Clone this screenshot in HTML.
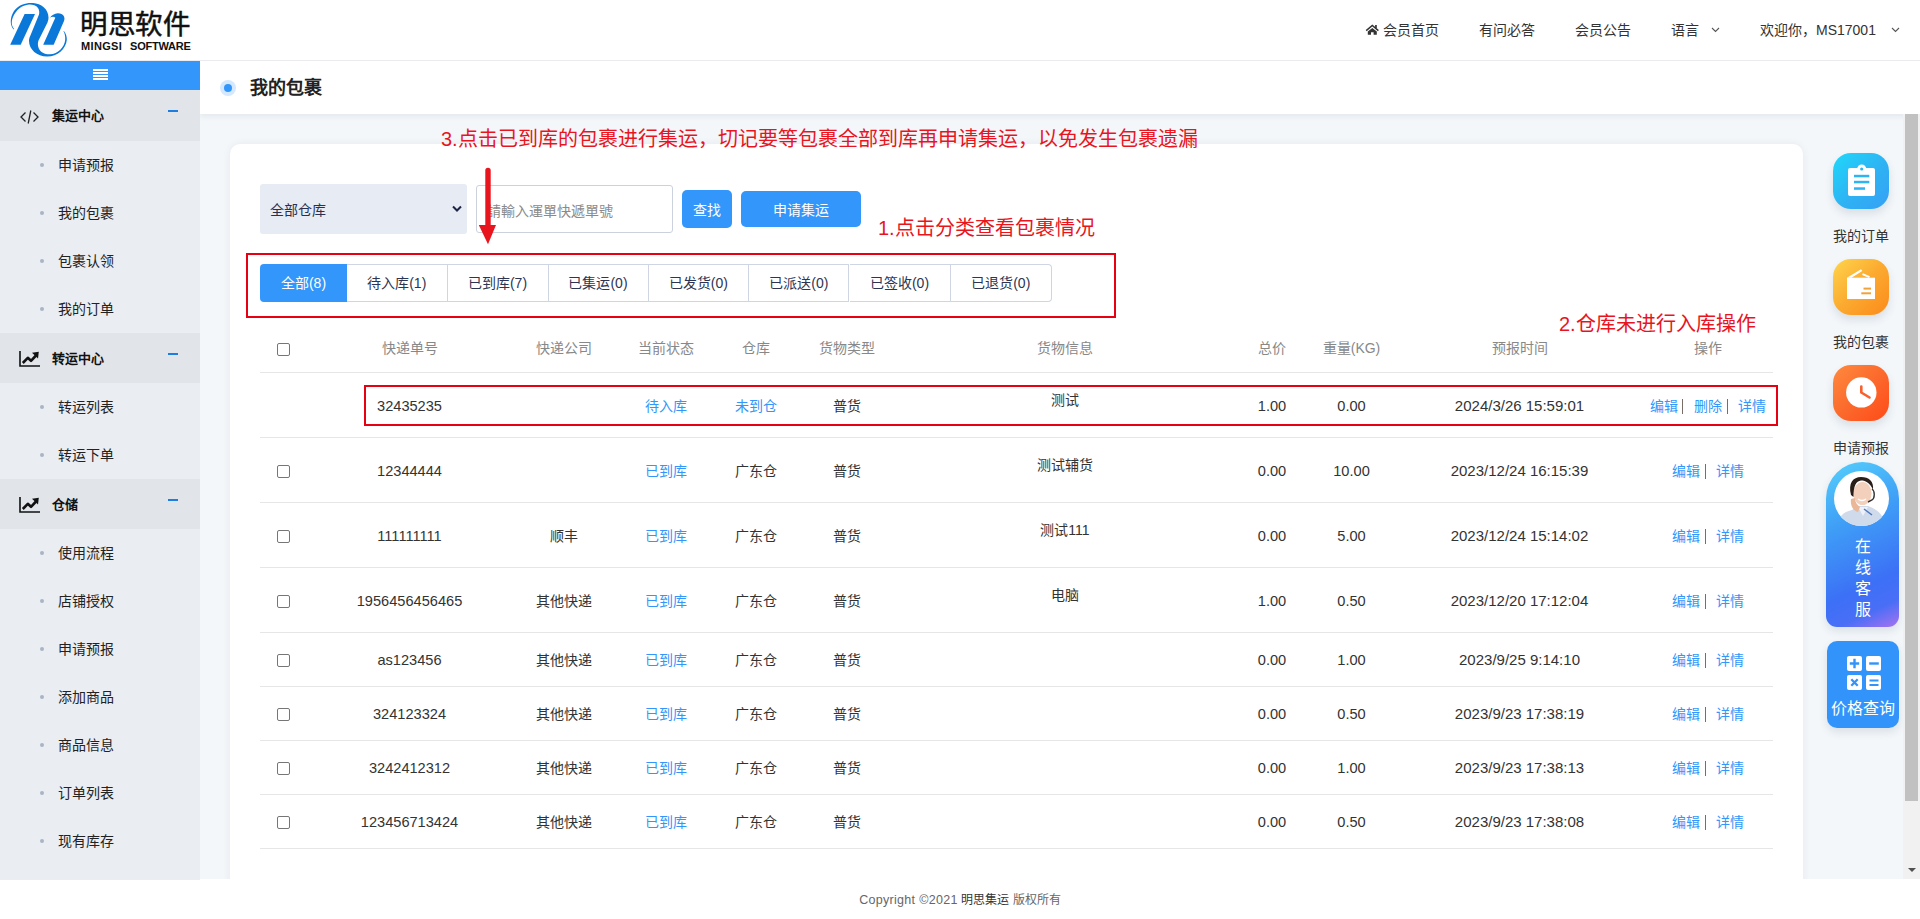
<!DOCTYPE html>
<html lang="zh-CN"><head><meta charset="utf-8">
<style>
*{box-sizing:border-box;margin:0;padding:0}
html,body{width:1920px;height:919px;overflow:hidden;background:#fff}
body{position:relative;font-family:"Liberation Sans",sans-serif;color:#333;font-size:14px}
.abs{position:absolute;white-space:nowrap}
#hdr{position:absolute;left:0;top:0;width:1920px;height:61px;background:#fff;border-bottom:1px solid #e9ebee}
.nav{position:absolute;top:20px;height:20px;line-height:20px;font-size:14px;color:#333}
#side{position:absolute;left:0;top:61px;width:200px;height:820px;background:#eaedf1}
#sidebar-top{position:absolute;left:0;top:0;width:200px;height:29px;background:#3296fa}
.grp{position:absolute;left:0;width:200px;height:50px;background:#e1e4e9}
.grp .t{position:absolute;left:52px;top:16px;line-height:20px;font-size:13px;font-weight:bold;color:#111}
.grp .m{position:absolute;left:168px;top:20px;width:10px;height:2px;background:#1e7de0}
.it{position:absolute;left:0;width:200px;height:48px}
.it .d{position:absolute;left:40px;top:22px;width:4px;height:4px;border-radius:50%;background:#aab4c4}
.it .t{position:absolute;left:58px;top:14px;line-height:20px;font-size:14px;color:#222}
#main{position:absolute;left:200px;top:61px;width:1720px;height:818px;background:#f3f7fa;overflow:hidden}
#mhdr{position:absolute;left:0;top:0;width:1720px;height:53px;background:#fff;box-shadow:0 2px 6px rgba(30,40,70,.08);z-index:3}
#card{position:absolute;left:30px;top:83px;width:1573px;height:800px;background:#fff;border-radius:10px;box-shadow:0 0 8px rgba(30,40,70,.06)}
#sb{position:absolute;left:1703px;top:53px;width:17px;height:765px;background:#f1f1f1;z-index:4}
#sbthumb{position:absolute;left:2px;top:0;width:13px;height:687px;background:#c1c1c1}
.red{color:#e8141e}
.tab{position:absolute;top:264px;height:38px;line-height:36px;border:1px solid #cfd5e2;border-left:none;background:#fff;color:#2e3552;font-size:14px;text-align:center}
.th{position:absolute;top:338px;line-height:20px;font-size:14px;color:#888;transform:translateX(-50%)}
.c{position:absolute;line-height:20px;font-size:14px;color:#333;transform:translateX(-50%)}
.n{font-size:14.6px}
.dt{font-size:15px}
.bl{color:#3296fa}
.line{position:absolute;left:260px;width:1513px;height:1px;background:#e6e6e6}
.cb{position:absolute;left:277px;width:13px;height:13px;border:1px solid #767676;border-radius:2px;background:#fff}
.fw{position:absolute;width:56px;height:56px;border-radius:18px}
.pipe{width:1.4px;height:15px;margin-top:3px;background:#7a6d65}
.fwt{position:absolute;left:1833px;line-height:20px;font-size:14px;color:#333}
</style></head>
<body>
<!-- HEADER -->
<div id="hdr">
  <svg class="abs" style="left:5px;top:0" width="70" height="60" viewBox="0 0 70 60">
    <g fill="#0a78d8">
      <path d="M19.6,14 L30,14 L15.7,44.7 L5.2,44.7 Z"/>
      <path d="M8.8,29.4 C5,26 4.5,18 9,11 C14,4 22,2.5 28,3 C36,3.5 43.5,9 43.5,17.5 C43.5,19.5 43,21 42.5,22.5 L33.5,40.5 C32.5,43 32.8,46 33.8,48.5 C35.5,52.5 40,54.5 45,54.3 C53,54 59.5,47 60.2,40 C60.5,36.5 59.8,33.5 58.5,31.2 L58.9,31 C61,33.5 62,37 61.8,40 C61,49 52,56.8 42,56.6 C32,56.4 24,49.5 24,41 C24,39 24.5,37.5 25,36.5 L34,14.5 C34.5,12.5 34.3,10 33,8 C31,5 27,4.3 24,4.5 C17,5 11,10 8,17 C6,22 6.5,26 9.2,29 Z"/>
      <path d="M38.2,44.7 L48.7,44.7 L59,21 C60.5,17.5 58.5,13.5 53,13.3 C49.5,13.2 46.5,15.5 45,17.8 C46.5,16.8 49,16.3 50.3,17.8 Z"/>
    </g>
  </svg>
  <div class="abs" style="left:80px;top:8px;font-size:27.5px;line-height:34px;letter-spacing:0.6px;color:#111;-webkit-text-stroke:0.5px #111">明思软件</div>
  <div class="abs" style="left:81px;top:39px;font-size:11px;line-height:14px;font-weight:bold;color:#111;letter-spacing:0.35px">MINGSI</div>
  <div class="abs" style="left:130px;top:39px;font-size:11px;line-height:14px;font-weight:bold;color:#111;letter-spacing:-0.2px">SOFTWARE</div>

  <svg class="abs" style="left:1365px;top:24px" width="15" height="12" viewBox="0 0 15 12"><path d="M1.2,6.6 L7.3,1.5 L13.4,6.6" stroke="#333" stroke-width="1.5" fill="none"/><rect x="10.1" y="1" width="1.7" height="3" fill="#333"/><path fill="#333" d="M7.3,3.9 L11.8,7.4 L11.8,10.8 L8.6,10.8 L8.6,8.3 L6,8.3 L6,10.8 L2.8,10.8 L2.8,7.4 Z"/></svg>
  <div class="nav" style="left:1383px">会员首页</div>
  <div class="nav" style="left:1479px">有问必答</div>
  <div class="nav" style="left:1575px">会员公告</div>
  <div class="nav" style="left:1671px">语言</div>
  <svg class="abs" style="left:1711px;top:27px" width="9" height="6" viewBox="0 0 9 6"><path d="M1,1 L4.5,4.5 L8,1" stroke="#555" stroke-width="1.1" fill="none"/></svg>
  <div class="nav" style="left:1760px">欢迎你，MS17001</div>
  <svg class="abs" style="left:1891px;top:27px" width="9" height="6" viewBox="0 0 9 6"><path d="M1,1 L4.5,4.5 L8,1" stroke="#555" stroke-width="1.1" fill="none"/></svg>
</div>

<!-- SIDEBAR -->
<div id="side">
  <div id="sidebar-top">
    <div class="abs" style="left:93px;top:8px;width:15px;height:11px;background:repeating-linear-gradient(#fff 0 2px,transparent 2px 3px)"></div>
  </div>
  <div class="grp" style="top:29px;height:51px">
    <svg class="abs" style="left:20px;top:20px" width="19" height="14" viewBox="0 0 19 14"><path d="M5.5,2.5 L1,7 L5.5,11.5 M13.5,2.5 L18,7 L13.5,11.5 M10.8,0.5 L8.2,13.5" stroke="#222" stroke-width="1.3" fill="none"/></svg>
    <div class="t">集运中心</div><div class="m"></div>
  </div>
  <div class="it" style="top:80px"><div class="d"></div><div class="t">申请预报</div></div>
  <div class="it" style="top:128px"><div class="d"></div><div class="t">我的包裹</div></div>
  <div class="it" style="top:176px"><div class="d"></div><div class="t">包裹认领</div></div>
  <div class="it" style="top:224px"><div class="d"></div><div class="t">我的订单</div></div>
  <div class="grp" style="top:272px">
    <svg class="abs" style="left:19px;top:18px" width="22" height="16" viewBox="0 0 22 16"><path d="M1,0 L1,15 L21,15" stroke="#111" stroke-width="1.6" fill="none"/><path d="M3.8,12 L8.8,6.8 L12,9.8 L17,4.5" stroke="#111" stroke-width="2.6" fill="none" stroke-linejoin="round"/><path d="M13,1.8 L19.8,0.8 L19,7.5 Z" fill="#111"/></svg>
    <div class="t">转运中心</div><div class="m"></div>
  </div>
  <div class="it" style="top:322px"><div class="d"></div><div class="t">转运列表</div></div>
  <div class="it" style="top:370px"><div class="d"></div><div class="t">转运下单</div></div>
  <div class="grp" style="top:418px">
    <svg class="abs" style="left:19px;top:18px" width="22" height="16" viewBox="0 0 22 16"><path d="M1,0 L1,15 L21,15" stroke="#111" stroke-width="1.6" fill="none"/><path d="M3.8,12 L8.8,6.8 L12,9.8 L17,4.5" stroke="#111" stroke-width="2.6" fill="none" stroke-linejoin="round"/><path d="M13,1.8 L19.8,0.8 L19,7.5 Z" fill="#111"/></svg>
    <div class="t">仓储</div><div class="m"></div>
  </div>
  <div class="it" style="top:468px"><div class="d"></div><div class="t">使用流程</div></div>
  <div class="it" style="top:516px"><div class="d"></div><div class="t">店铺授权</div></div>
  <div class="it" style="top:564px"><div class="d"></div><div class="t">申请预报</div></div>
  <div class="it" style="top:612px"><div class="d"></div><div class="t">添加商品</div></div>
  <div class="it" style="top:660px"><div class="d"></div><div class="t">商品信息</div></div>
  <div class="it" style="top:708px"><div class="d"></div><div class="t">订单列表</div></div>
  <div class="it" style="top:756px"><div class="d"></div><div class="t">现有库存</div></div>
</div>

<!-- MAIN -->
<div id="main">
  <div id="mhdr">
    <div class="abs" style="left:20px;top:19px;width:16px;height:16px;border-radius:50%;background:#d5e8fd"></div>
    <div class="abs" style="left:24px;top:23px;width:8px;height:8px;border-radius:50%;background:#3296fa"></div>
    <div class="abs" style="left:50px;top:15px;font-size:18px;line-height:24px;font-weight:bold;color:#222">我的包裹</div>
  </div>
  <div id="card"></div>
  <div id="sb"><div id="sbthumb"></div>
    <div class="abs" style="left:5px;top:754px;width:0;height:0;border-left:4px solid transparent;border-right:4px solid transparent;border-top:4px solid #505050"></div>
  </div>
</div>

<!-- CONTENT (page coords) -->
<div id="content" style="position:absolute;left:0;top:0;width:1920px;height:879px;overflow:hidden;pointer-events:none">
<div class="abs red" style="left:441px;top:125px;font-size:20px;line-height:28px">3.点击已到库的包裹进行集运，切记要等包裹全部到库再申请集运，以免发生包裹遗漏</div>
<div class="abs" style="left:260px;top:184px;width:207px;height:50px;background:#e6ebf4;border-radius:3px"></div>
<div class="abs" style="left:270px;top:200px;line-height:20px;color:#2a3150">全部仓库</div>
<svg class="abs" style="left:452px;top:205px" width="10" height="8" viewBox="0 0 10 8"><path d="M1,1.5 L5,5.5 L9,1.5" stroke="#1e2645" stroke-width="2" fill="none"/></svg>
<div class="abs" style="left:476px;top:185px;width:197px;height:48px;border:1px solid #cbd2de;border-radius:3px;background:#fff"></div>
<div class="abs" style="left:487px;top:201px;line-height:20px;color:#8a8a8a">請輸入運單快遞單號</div>
<div class="abs" style="left:682px;top:190px;width:50px;height:38px;border-radius:5px;background:#3296fa;color:#fff;text-align:center;line-height:38px;padding-top:1px">查找</div>
<div class="abs" style="left:741px;top:191px;width:120px;height:36px;border-radius:5px;background:#3296fa;color:#fff;text-align:center;line-height:36px;padding-top:1px">申请集运</div>
<svg class="abs" style="left:476px;top:166px" width="24" height="80" viewBox="0 0 24 80"><path d="M12,4.5 L12,62" stroke="#e8141e" stroke-width="5.4" stroke-linecap="round"/><path d="M2.8,59 L20,59 L12,78.3 Z" fill="#e8141e"/></svg>
<div class="abs red" style="left:878px;top:214px;font-size:20px;line-height:28px">1.点击分类查看包裹情况</div>
<div class="abs" style="left:246px;top:253px;width:870px;height:65px;border:2.6px solid #e60012"></div>
<div class="abs" style="left:260px;top:264px;width:87px;height:38px;line-height:38px;background:#3296fa;color:#fff;text-align:center;border-radius:4px 0 0 4px">全部(8)</div>
<div class="tab" style="left:347px;width:100.5px;">待入库(1)</div>
<div class="tab" style="left:447.5px;width:101.0px;">已到库(7)</div>
<div class="tab" style="left:548.5px;width:100.0px;">已集运(0)</div>
<div class="tab" style="left:648.5px;width:100.79999999999995px;">已发货(0)</div>
<div class="tab" style="left:749.3px;width:100.20000000000005px;">已派送(0)</div>
<div class="tab" style="left:849.5px;width:101.0px;">已签收(0)</div>
<div class="tab" style="left:950.5px;width:101.5px;border-radius:0 4px 4px 0;">已退货(0)</div>
<div class="cb" style="top:343px"></div>
<div class="th" style="left:409.5px">快递单号</div>
<div class="th" style="left:564px">快递公司</div>
<div class="th" style="left:666px">当前状态</div>
<div class="th" style="left:756px">仓库</div>
<div class="th" style="left:847px">货物类型</div>
<div class="th" style="left:1065px">货物信息</div>
<div class="th" style="left:1272px">总价</div>
<div class="th" style="left:1351.5px">重量(KG)</div>
<div class="th" style="left:1519.5px">预报时间</div>
<div class="th" style="left:1707.5px">操作</div>
<div class="line" style="top:372px"></div>
<div class="c n" style="left:409.5px;top:396px">32435235</div>
<div class="c bl" style="left:666px;top:396px">待入库</div>
<div class="c bl" style="left:756px;top:396px">未到仓</div>
<div class="c" style="left:847px;top:396px">普货</div>
<div class="c" style="left:1065px;top:390px">测试</div>
<div class="c n" style="left:1272px;top:396px">1.00</div>
<div class="c n" style="left:1351.5px;top:396px">0.00</div>
<div class="c dt" style="left:1519.5px;top:396px">2024/3/26 15:59:01</div>
<div class="abs bl" style="left:1650px;top:396px;line-height:20px">编辑</div>
<div class="abs pipe" style="left:1682px;top:396px"></div>
<div class="abs bl" style="left:1694px;top:396px;line-height:20px">删除</div>
<div class="abs pipe" style="left:1727px;top:396px"></div>
<div class="abs bl" style="left:1738px;top:396px;line-height:20px">详情</div>
<div class="line" style="top:437px"></div>
<div class="cb" style="top:465px"></div>
<div class="c n" style="left:409.5px;top:461px">12344444</div>
<div class="c bl" style="left:666px;top:461px">已到库</div>
<div class="c" style="left:756px;top:461px">广东仓</div>
<div class="c" style="left:847px;top:461px">普货</div>
<div class="c" style="left:1065px;top:455px">测试辅货</div>
<div class="c n" style="left:1272px;top:461px">0.00</div>
<div class="c n" style="left:1351.5px;top:461px">10.00</div>
<div class="c dt" style="left:1519.5px;top:461px">2023/12/24 16:15:39</div>
<div class="abs bl" style="left:1672px;top:461px;line-height:20px">编辑</div>
<div class="abs pipe" style="left:1705px;top:461px"></div>
<div class="abs bl" style="left:1716px;top:461px;line-height:20px">详情</div>
<div class="line" style="top:502px"></div>
<div class="cb" style="top:530px"></div>
<div class="c n" style="left:409.5px;top:526px">111111111</div>
<div class="c" style="left:564px;top:526px">顺丰</div>
<div class="c bl" style="left:666px;top:526px">已到库</div>
<div class="c" style="left:756px;top:526px">广东仓</div>
<div class="c" style="left:847px;top:526px">普货</div>
<div class="c" style="left:1065px;top:520px">测试111</div>
<div class="c n" style="left:1272px;top:526px">0.00</div>
<div class="c n" style="left:1351.5px;top:526px">5.00</div>
<div class="c dt" style="left:1519.5px;top:526px">2023/12/24 15:14:02</div>
<div class="abs bl" style="left:1672px;top:526px;line-height:20px">编辑</div>
<div class="abs pipe" style="left:1705px;top:526px"></div>
<div class="abs bl" style="left:1716px;top:526px;line-height:20px">详情</div>
<div class="line" style="top:567px"></div>
<div class="cb" style="top:595px"></div>
<div class="c n" style="left:409.5px;top:591px">1956456456465</div>
<div class="c" style="left:564px;top:591px">其他快递</div>
<div class="c bl" style="left:666px;top:591px">已到库</div>
<div class="c" style="left:756px;top:591px">广东仓</div>
<div class="c" style="left:847px;top:591px">普货</div>
<div class="c" style="left:1065px;top:585px">电脑</div>
<div class="c n" style="left:1272px;top:591px">1.00</div>
<div class="c n" style="left:1351.5px;top:591px">0.50</div>
<div class="c dt" style="left:1519.5px;top:591px">2023/12/20 17:12:04</div>
<div class="abs bl" style="left:1672px;top:591px;line-height:20px">编辑</div>
<div class="abs pipe" style="left:1705px;top:591px"></div>
<div class="abs bl" style="left:1716px;top:591px;line-height:20px">详情</div>
<div class="line" style="top:632px"></div>
<div class="cb" style="top:654px"></div>
<div class="c n" style="left:409.5px;top:650px">as123456</div>
<div class="c" style="left:564px;top:650px">其他快递</div>
<div class="c bl" style="left:666px;top:650px">已到库</div>
<div class="c" style="left:756px;top:650px">广东仓</div>
<div class="c" style="left:847px;top:650px">普货</div>
<div class="c n" style="left:1272px;top:650px">0.00</div>
<div class="c n" style="left:1351.5px;top:650px">1.00</div>
<div class="c dt" style="left:1519.5px;top:650px">2023/9/25 9:14:10</div>
<div class="abs bl" style="left:1672px;top:650px;line-height:20px">编辑</div>
<div class="abs pipe" style="left:1705px;top:650px"></div>
<div class="abs bl" style="left:1716px;top:650px;line-height:20px">详情</div>
<div class="line" style="top:686px"></div>
<div class="cb" style="top:708px"></div>
<div class="c n" style="left:409.5px;top:704px">324123324</div>
<div class="c" style="left:564px;top:704px">其他快递</div>
<div class="c bl" style="left:666px;top:704px">已到库</div>
<div class="c" style="left:756px;top:704px">广东仓</div>
<div class="c" style="left:847px;top:704px">普货</div>
<div class="c n" style="left:1272px;top:704px">0.00</div>
<div class="c n" style="left:1351.5px;top:704px">0.50</div>
<div class="c dt" style="left:1519.5px;top:704px">2023/9/23 17:38:19</div>
<div class="abs bl" style="left:1672px;top:704px;line-height:20px">编辑</div>
<div class="abs pipe" style="left:1705px;top:704px"></div>
<div class="abs bl" style="left:1716px;top:704px;line-height:20px">详情</div>
<div class="line" style="top:740px"></div>
<div class="cb" style="top:762px"></div>
<div class="c n" style="left:409.5px;top:758px">3242412312</div>
<div class="c" style="left:564px;top:758px">其他快递</div>
<div class="c bl" style="left:666px;top:758px">已到库</div>
<div class="c" style="left:756px;top:758px">广东仓</div>
<div class="c" style="left:847px;top:758px">普货</div>
<div class="c n" style="left:1272px;top:758px">0.00</div>
<div class="c n" style="left:1351.5px;top:758px">1.00</div>
<div class="c dt" style="left:1519.5px;top:758px">2023/9/23 17:38:13</div>
<div class="abs bl" style="left:1672px;top:758px;line-height:20px">编辑</div>
<div class="abs pipe" style="left:1705px;top:758px"></div>
<div class="abs bl" style="left:1716px;top:758px;line-height:20px">详情</div>
<div class="line" style="top:794px"></div>
<div class="cb" style="top:816px"></div>
<div class="c n" style="left:409.5px;top:812px">123456713424</div>
<div class="c" style="left:564px;top:812px">其他快递</div>
<div class="c bl" style="left:666px;top:812px">已到库</div>
<div class="c" style="left:756px;top:812px">广东仓</div>
<div class="c" style="left:847px;top:812px">普货</div>
<div class="c n" style="left:1272px;top:812px">0.00</div>
<div class="c n" style="left:1351.5px;top:812px">0.50</div>
<div class="c dt" style="left:1519.5px;top:812px">2023/9/23 17:38:08</div>
<div class="abs bl" style="left:1672px;top:812px;line-height:20px">编辑</div>
<div class="abs pipe" style="left:1705px;top:812px"></div>
<div class="abs bl" style="left:1716px;top:812px;line-height:20px">详情</div>
<div class="line" style="top:848px"></div>
<div class="abs" style="left:364px;top:385px;width:1414px;height:41px;border:2.6px solid #e60012"></div>
<div class="abs red" style="left:1559px;top:310px;font-size:20px;line-height:28px">2.仓库未进行入库操作</div>
</div>

<!-- /CONTENT -->

<!-- RIGHT WIDGETS -->
<div class="fw" style="left:1833px;top:153px;background:linear-gradient(135deg,#1fd8fb 0%,#2fb2f3 55%,#35a0f5 100%);box-shadow:0 5px 8px rgba(40,60,90,.12)">
  <svg class="abs" style="left:14px;top:11px" width="28" height="34" viewBox="0 0 28 34"><rect x="1" y="4" width="27" height="28" rx="2" fill="#fff"/><circle cx="14.7" cy="5" r="4.5" fill="#fff"/><circle cx="14.7" cy="5" r="1.6" fill="#2db4f3"/><rect x="7" y="10.8" width="15.3" height="2.5" fill="#2db4f3"/><rect x="7" y="16.8" width="15.3" height="2.5" fill="#2db4f3"/><rect x="7" y="23.3" width="11" height="2.5" fill="#2db4f3"/></svg>
</div>
<div class="fwt" style="top:226px">我的订单</div>
<div class="fw" style="left:1833px;top:259px;background:linear-gradient(135deg,#ffd54c 0%,#fbaa2f 50%,#fb8a1b 100%);box-shadow:0 5px 8px rgba(40,60,90,.12)">
  <svg class="abs" style="left:13px;top:9px" width="30" height="32" viewBox="0 0 30 32"><path fill="#fff" d="M1,9.7 L29,9.7 L29,31 L1,31 Z"/><path fill="#fff" d="M1,9.7 L15,1.2 L16.3,3 L5.5,9.7 Z"/><path d="M16.5,6.2 L23.5,9.2" stroke="#fff" stroke-width="2"/><rect x="17.5" y="19.6" width="7.5" height="2" fill="#f2a238"/><rect x="15.3" y="24.3" width="9.7" height="2" fill="#f2a238"/></svg>
</div>
<div class="fwt" style="top:332px">我的包裹</div>
<div class="fw" style="left:1833px;top:365px;background:linear-gradient(135deg,#ff8a3e 0%,#fb6a2c 50%,#ff4a18 100%);box-shadow:0 5px 8px rgba(40,60,90,.12)">
  <svg class="abs" style="left:13px;top:12px" width="32" height="32" viewBox="0 0 32 32"><circle cx="15.3" cy="15.4" r="15.2" fill="#fff"/><path d="M15.3,9.5 L15.3,15.5 L23.5,20.5" stroke="#f86030" stroke-width="2.6" stroke-linecap="round" stroke-linejoin="round" fill="none"/></svg>
</div>
<div class="fwt" style="top:438px">申请预报</div>
<div class="abs" style="left:1826px;top:462px;width:73px;height:165px;border-radius:36.5px 36.5px 11px 11px;background:linear-gradient(155deg,#55d0fc 0%,#3f9ef6 35%,#3c70f6 72%,#4a6ef6 86%,#a872f0 100%);box-shadow:0 4px 8px rgba(40,60,90,.12)">
  <div class="abs" style="left:8px;top:8.5px;width:55px;height:55px;border-radius:50%;background:#fff;overflow:hidden">
    <svg width="55" height="55" viewBox="0 0 55 55"><path d="M3,55 C4,46 9,41 18,39 L24,35 L34,35 C43,38 50,44 52,55 Z" fill="#cfdaeb"/><path d="M24,36 L29,45 L34,36 Z" fill="#eef2f8"/><path d="M30,38 L38,44" stroke="#4a78c0" stroke-width="1.5"/><ellipse cx="28.5" cy="22.5" rx="9" ry="11.5" fill="#f2d0bb"/><path d="M17,24 C14,12 19,6 27,6 C35,6 40,10 39,19 C36,12 32,9.5 27,9.5 C22,10 19.5,15 19.5,26 Z" fill="#2a1e19"/><path d="M17,28 C16,34 19,40 24,41 L26,36 C23,34 21,31 21,27 Z" fill="#eab898"/><path d="M38,18 C41,20 41,27 38,29 L34,31" stroke="#333" stroke-width="1.4" fill="none"/><path d="M24,28 Q28,31 32,28" stroke="#fff" stroke-width="1.4" fill="none"/></svg>
  </div>
  <div class="abs" style="left:0;top:74px;width:73px;text-align:center;white-space:normal;font-size:16px;line-height:21px;color:#fff">在<br>线<br>客<br>服</div>
</div>
<div class="abs" style="left:1827px;top:641px;width:72px;height:87px;border-radius:10px;background:#3294fa;box-shadow:0 4px 8px rgba(40,60,90,.12)">
  <svg class="abs" style="left:20px;top:15px" width="35" height="35" viewBox="0 0 35 35"><rect x="0" y="0" width="15" height="15" rx="2" fill="#fff"/><rect x="19" y="0" width="15" height="15" rx="2" fill="#fff"/><rect x="0" y="19" width="15" height="15" rx="2" fill="#fff"/><rect x="19" y="19" width="15" height="15" rx="2" fill="#fff"/><path d="M7.5,2.8 L7.5,12.2 M2.8,7.5 L12.2,7.5" stroke="#3294fa" stroke-width="2.4"/><path d="M22.2,7.5 L31.8,7.5" stroke="#3294fa" stroke-width="2.4"/><path d="M4.3,23.3 L10.7,29.7 M10.7,23.3 L4.3,29.7" stroke="#3294fa" stroke-width="2.3"/><path d="M22.5,24.5 L31.5,24.5 M22.5,29 L31.5,29" stroke="#3294fa" stroke-width="2.2"/></svg>
  <div class="abs" style="left:0;top:57px;width:72px;text-align:center;font-size:16px;line-height:22px;color:#fff">价格查询</div>
</div>
<!-- FOOTER -->
<div class="abs" style="left:0;top:880px;width:1920px;height:39px;background:#fff"></div>
<div class="abs" style="left:0;top:890px;width:1920px;text-align:center;font-size:12px;line-height:20px;color:#666"><span style="font-size:12.5px;letter-spacing:0.3px">Copyright ©2021 </span><span style="color:#333">明思集运</span> 版权所有</div>
</body></html>
